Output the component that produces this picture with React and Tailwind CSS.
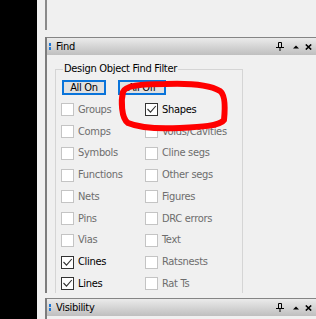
import React from 'react';

const FONT = { fontFamily: '"DejaVu Sans Condensed", "Liberation Sans", sans-serif' };

const filters = [
  ['Groups', false, false, 'Shapes', true, true],
  ['Comps', false, false, 'Voids/Cavities', false, false],
  ['Symbols', false, false, 'Cline segs', false, false],
  ['Functions', false, false, 'Other segs', false, false],
  ['Nets', false, false, 'Figures', false, false],
  ['Pins', false, false, 'DRC errors', false, false],
  ['Vias', false, false, 'Text', false, false],
  ['Clines', true, true, 'Ratsnests', false, false],
  ['Lines', true, true, 'Rat Ts', false, false],
];

const CheckBox = ({ label, checked, enabled }) => (
  <div className="flex items-center h-[21.75px]">
    <span
      className={`w-[13px] h-[13px] border bg-white flex items-center justify-center shrink-0 ${
        enabled ? 'border-[#333333]' : 'border-[#c4c4c4]'
      }`}
    >
      {checked && (
        <svg width="11" height="11" viewBox="0 0 11 11">
          <path d="M1.5 5 L4.5 8.2 L9.8 2" stroke="#333333" strokeWidth="1.1" fill="none" />
        </svg>
      )}
    </span>
    <span
      className={`ml-[4px] text-[11px] leading-[14px] tracking-[-0.3px] whitespace-nowrap ${
        enabled ? 'text-black' : 'text-[#6d6d6d]'
      }`}
    >
      {label}
    </span>
  </div>
);

// header of a docked pane: marker, title and pin / min / close glyphs
const PaneHeader = ({ title }) => (
  <div className="h-[18px] border-t border-[#858585] bg-gradient-to-b from-[#ebebeb] to-[#bfbfbf] flex items-center shrink-0">
    <div className="ml-[2px] flex flex-col gap-[1px]">
      <span className="w-[2px] h-[3px] bg-[#1e78d8]" />
      <span className="w-[2px] h-[3px] bg-[#1e78d8]" />
    </div>
    <span className="ml-[5px] text-[11px] leading-[14px] tracking-[-0.3px] text-black">{title}</span>
    <div className="ml-auto flex items-center mr-[4px]">
      <svg width="8" height="9" viewBox="0 0 8 9">
        <path d="M2.5 0.5 H5.5 V5 M2.5 0.5 V5 M0 5.5 H8 M4 5.5 V9" stroke="#000" strokeWidth="1" fill="none" />
      </svg>
      <svg className="ml-[9px]" width="6" height="4" viewBox="0 0 6 4">
        <path d="M0 3.5 L3 0.5 L6 3.5 Z" fill="#000" />
      </svg>
      <svg className="ml-[6px]" width="7" height="6" viewBox="0 0 7 6">
        <path d="M0.8 0.5 L6.2 5.5 M6.2 0.5 L0.8 5.5" stroke="#000" strokeWidth="1.6" />
      </svg>
    </div>
  </div>
);

const App = () => {
  return (
    <div className="relative w-[316px] h-[319px] overflow-hidden flex bg-[#f0f0f0]" style={FONT}>
      <div className="w-[37px] bg-black shrink-0" />
      <div className="w-[8px] shrink-0" />

      <div className="flex-1 flex flex-col min-w-0">
        {/* pane above, cut off */}
        <div className="h-[37px] shrink-0">
          <div className="w-[2px] h-[30px] bg-[#8a8a8a]" />
        </div>

        {/* Find pane */}
        <div className="flex flex-col border-l-2 border-[#7d7d7d] h-[256px] shrink-0">
          <PaneHeader title="Find" />
          <div className="flex-1 overflow-hidden">
            <div className="ml-[8px] mt-[14px] w-[188px] h-[260px] border border-[#d5d5d5] flex flex-col">
              <span className="self-start ml-[7px] -mt-[8px] px-[1px] bg-[#f0f0f0] text-[11px] leading-[14px] tracking-[-0.3px] text-black whitespace-nowrap">
                Design Object Find Filter
              </span>

              <div className="flex gap-[12px] pl-[6px] mt-[4px]">
                <button className="w-[44px] h-[15px] border-2 border-[#0a74da] bg-[#e1e1e1] text-[11px] leading-[11px] tracking-[-0.3px] text-black">
                  All On
                </button>
                <button className="w-[48px] h-[15px] border-2 border-[#0a74da] bg-[#e1e1e1] text-[11px] leading-[11px] tracking-[-0.3px] text-black">
                  All Off
                </button>
              </div>

              <div className="grid grid-cols-[84px_1fr] pl-[5px] mt-[4px]">
                {filters.map(([l, lc, le, r, rc, re]) => (
                  <React.Fragment key={l}>
                    <CheckBox label={l} checked={lc} enabled={le} />
                    <CheckBox label={r} checked={rc} enabled={re} />
                  </React.Fragment>
                ))}
              </div>
            </div>
          </div>
        </div>

        <div className="h-[5px] shrink-0" />

        {/* Visibility pane */}
        <div className="flex flex-col border-l-2 border-[#7d7d7d] flex-1">
          <PaneHeader title="Visibility" />
        </div>
      </div>

      {/* red hand-drawn marking over the Shapes option */}
      <svg className="absolute inset-0 pointer-events-none" width="316" height="319" viewBox="0 0 316 319">
        <path
          d="M123 92 C125 86, 140 84, 165 84 C190 83, 210 85, 220 91 C226 95, 225 110, 224 120 C220 126, 200 127, 180 128 C160 129, 140 128, 128 123 C121 118, 121 100, 123 92 Z"
          stroke="#ff0000"
          strokeWidth="6"
          fill="none"
          strokeLinejoin="round"
        />
      </svg>
    </div>
  );
};

export default App;
